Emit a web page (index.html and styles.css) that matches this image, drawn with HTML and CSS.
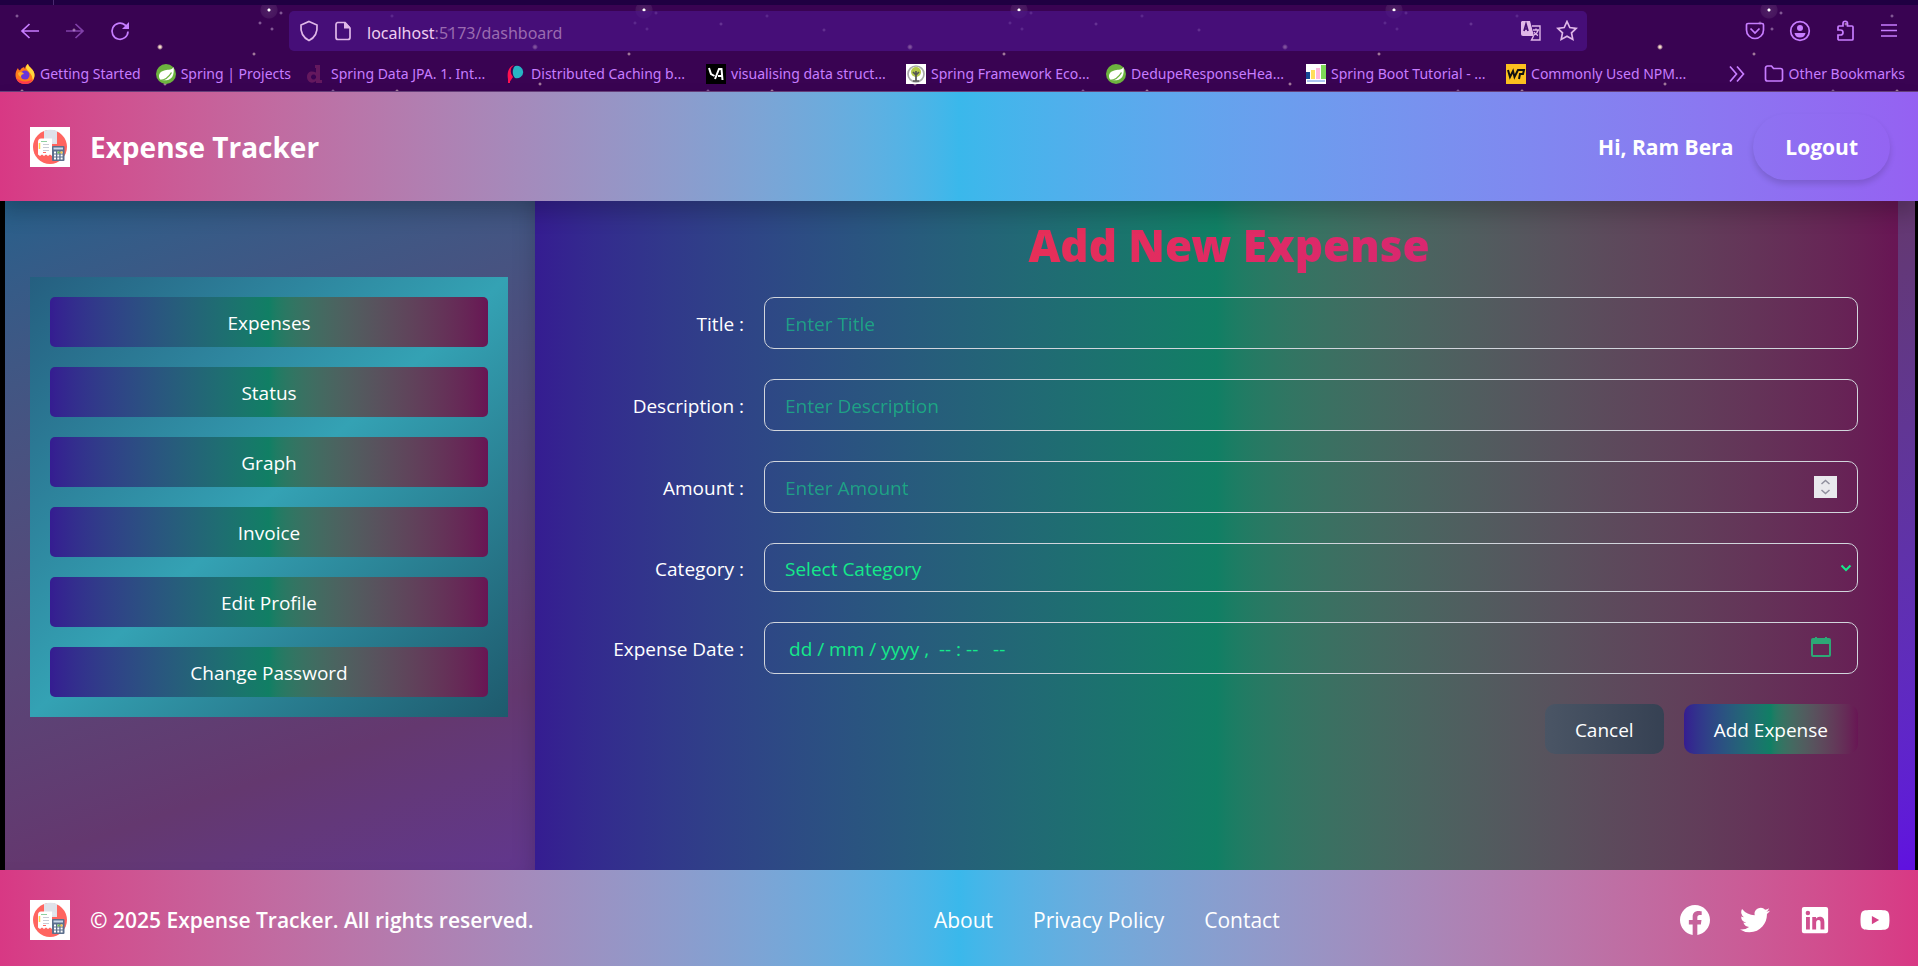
FILE: index.html
```html
<!DOCTYPE html>
<html lang="en">
<head>
<meta charset="utf-8">
<title>Expense Tracker</title>
<link rel="stylesheet" href="styles.css">
</head>
<body>
<svg class="defs" aria-hidden="true">
  <symbol id="logo" viewBox="0 0 40 40">
    <rect width="40" height="40" fill="#fff"/>
    <circle cx="20" cy="20" r="17" fill="#ff6560"/>
    <path d="M14 4.100a17 17 0 0 1 13 0V17H14z" fill="#dfe2ea"/>
    <path d="M11 11.500h11V29l-2-1.500-2 1.500-2-1.500-2 1.500-2-1.500-2 1.500-2-1.500V15c0-2 1-3.500 3-3.500z" fill="#fff"/>
    <path d="M22 11.500c3 0 4 1.500 4 3.500h-4z" fill="#e3e6ee"/>
    <path d="M11 14.500h6" stroke="#8fd0a0" stroke-width="1"/>
    <path d="M13 17.500h6M13 20.500h6M13 23.500h6" stroke="#c9ccd6" stroke-width="1"/>
    <path d="M9.500 16v6" stroke="#ffd54a" stroke-width="1.500"/>
    <path d="M13 25.500h3" stroke="#ff6b66" stroke-width="1"/>
    <rect x="22" y="19" width="12.500" height="15" rx="1" fill="#5b6f8c"/>
    <rect x="23.500" y="20.500" width="9.500" height="2" fill="#c9d8ea"/>
    <path d="M24 25.500h9M24 28.500h9M24 31.500h9" stroke="#fff" stroke-width="2" stroke-dasharray="2 1.300"/>
    <path d="M27.500 24.500h2v2h-2z" fill="#6fc24a"/><path d="M30.500 24.500h2v2h-2z" fill="#ffc93d"/>
  </symbol>
  <symbol id="leaf" viewBox="0 0 20 20">
    <circle cx="10" cy="10" r="10" fill="#6db33f"/>
    <path d="M17.500 3C16 6 13 5.500 9 6.200 5 7 2.800 9.500 3 12.500c.1 1.500.8 2.800 1.600 3.500 4 .6 9 .8 11.600-3C18 10 18 6 17.500 3z" fill="#fff"/>
    <path d="M4 16.500C9 16 13 13 15.500 8.500" fill="none" stroke="#6db33f" stroke-width="1.300"/>
  </symbol>
</svg>

<div class="browser">
  <div class="tabstrip"></div>
  <div class="toolbar">
    <div class="nav">
      <button class="tool" aria-label="Back"><svg width="20" height="20" viewBox="0 0 20 20"><path d="M19 10H2M9.500 3 2 10l7.500 7"/></svg></button>
      <button class="tool dim" aria-label="Forward"><svg width="20" height="20" viewBox="0 0 20 20"><path d="M1 10h17M10.500 3 18 10l-7.500 7"/></svg></button>
      <button class="tool" aria-label="Reload"><svg width="20" height="20" viewBox="0 0 20 20"><path d="M18 10.500A8 8 0 1 1 15 4l1.500 1.500"/><path d="M19 1v7h-7z" fill="currentColor" stroke="none"/></svg></button>
    </div>
    <div class="urlbar">
      <svg width="20" height="22" viewBox="0 0 20 22"><path d="M10 1.500 18 5c.7 7-2 12.500-8 15.500C4 17.500 1.300 12 2 5z"/></svg>
      <svg width="20" height="20" viewBox="0 0 20 20"><path d="M4.500 1.500H12L17 7v9.500a2 2 0 0 1-2 2H5a2 2 0 0 1-2-2V3.500a2 2 0 0 1 1.500-2z"/><path d="M11 1.500h1.500L17 6v1.500h-6z" fill="currentColor" stroke="none"/></svg>
      <span class="url"><b>localhost</b>:5173/dashboard</span>
      <svg class="translate" width="22" height="22" viewBox="0 0 22 22"><path d="M2 1h8l4 15H3a2 2 0 0 1-2-2V2z" fill="currentColor" stroke="none"/><path d="m4 11 2-7 2 7M4.700 9h2.600" stroke="#440e71"/><path d="M12 6h8v14h-8.500l2-4M13 10h6M16 8.500V10m2 0c-.5 3-2 4-4 5m0-3c1 2 3 3 4 3.500" stroke-width="1.400"/></svg>
      <svg width="22" height="22" viewBox="0 0 22 22"><path d="m11 1.500 2.800 6 6.500.8-4.800 4.500 1.300 6.600L11 16.200l-5.800 3.200 1.300-6.600L1.700 8.300l6.500-.8z"/></svg>
    </div>
    <div class="tools">
      <button class="tool" aria-label="Pocket"><svg width="20" height="20" viewBox="0 0 20 20"><path d="M3 2.500h14a1.500 1.500 0 0 1 1.500 1.500v5a8.500 8.500 0 0 1-17 0V4A1.500 1.500 0 0 1 3 2.500zM5.500 7.500 10 12l4.500-4.500"/></svg></button>
      <button class="tool" aria-label="Account"><svg width="22" height="22" viewBox="0 0 22 22"><circle cx="11" cy="11" r="9.300"/><circle cx="11" cy="8" r="3" fill="currentColor" stroke="none"/><path d="M5.500 13h11a5.600 5.600 0 0 1-11 0z" fill="currentColor" stroke="none"/></svg></button>
      <button class="tool" aria-label="Extensions"><svg width="20" height="22" viewBox="0 0 20 22"><path d="M2 10V7a1 1 0 0 1 1-1h4V3.500a2 2 0 0 1 4.500 0V6H16a1 1 0 0 1 1 1v12a1 1 0 0 1-1 1H3a1 1 0 0 1-1-1v-4h2.500a2.500 2.500 0 0 0 0-5H2z"/></svg></button>
      <button class="tool" aria-label="Menu"><svg width="18" height="20" viewBox="0 0 18 20"><path d="M1 4h16M1 9.500h16M1 15h16"/></svg></button>
    </div>
  </div>
  <nav class="bookmarks">
    <a href="#"><svg width="20" height="20" viewBox="0 0 20 20"><path d="M10 20C4 20 .5 16 .5 11c0-3 1-5 2.500-7 .3 1.500 1 2 2 2.500C6 4 8 3.500 9 3l1 2c0-2 1-4 3-5 .5 3 6.500 5 6.500 11S16 20 10 20z" fill="#ff7a1a"/><path d="M13 0c0 3 6.500 5 6.500 11 0 2-.7 4-2 5.500C18 10 13 8 11 4c0-2 1-3.500 2-4z" fill="#ffd83d"/><path d="M1 13c3 5 12 6 17 2-1.500 3-4.500 5-8 5-4.500 0-8-2.500-9-7z" fill="#ff3a4d"/><circle cx="10" cy="11" r="4.500" fill="#6a35d9"/><path d="M3 9c2-2 5-1 6 1-2 0-3 1-3 3-2-1-3-2-3-4z" fill="#ffb02e"/></svg><span>Getting Started</span></a>
    <a href="#"><svg width="20" height="20"><use href="#leaf"/></svg><span>Spring | Projects</span></a>
    <a class="long" href="#"><svg width="20" height="20" viewBox="0 0 20 20"><path d="M9 1h5v15h2v3h-6v-2c-4 3.500-9 1-9-4s4-7 9-4.500V4H9zM7.500 10.500a2.500 2.500 0 1 0 .1 0z" fill="#64185e" fill-rule="evenodd"/></svg><span>Spring Data JPA. 1. Int...</span></a>
    <a class="long" href="#"><svg width="20" height="20" viewBox="0 0 20 20"><path d="M8 1a8 8 0 0 0-1 12L3 19C0 10 2 3 8 1z" fill="#ff1150"/><path d="M4 12v7H2v-8z" fill="#ff1150"/><path d="M9 2a6.300 6.300 0 1 1 0 12c-3-3-3-9 0-12z" fill="#27b4c4"/></svg><span>Distributed Caching b...</span></a>
    <a class="long" href="#"><svg width="20" height="20" viewBox="0 0 20 20"><path d="M0 0h20v20H0z" fill="#000"/><path d="m3 4 2 6 3.500 2M9 15l4-10h2.500l1 11M12 12h4" fill="none" stroke="#fff" stroke-width="2"/></svg><span>visualising data struct...</span></a>
    <a class="long" href="#"><svg width="20" height="20" viewBox="0 0 20 20"><path d="M0 0h20v20H0z" fill="#fff"/><circle cx="10" cy="10" r="8" fill="none" stroke="#aaa"/><circle cx="10" cy="8" r="5" fill="#b5c94a"/><path d="M10 7v10M7 17h6M10 11l-3-3M10 11l3-3" stroke="#555" fill="none"/></svg><span>Spring Framework Eco...</span></a>
    <a class="long" href="#"><svg width="20" height="20"><use href="#leaf"/></svg><span>DedupeResponseHea...</span></a>
    <a class="long" href="#"><svg width="20" height="20" viewBox="0 0 20 20"><path d="M0 0h20v20H0z" fill="#fff"/><path d="M0 8h4v7H0z" fill="#164a94"/><path d="M5 6h4v9H5z" fill="#ffdf5a"/><path d="M10 4h4v11h-4z" fill="#ffb8dd"/><path d="M15 1h5v14h-5z" fill="#7ed957"/><path d="M1 17h18" stroke="#9dbcf0"/></svg><span>Spring Boot Tutorial - ...</span></a>
    <a class="long" href="#"><svg width="20" height="20" viewBox="0 0 20 20"><path d="M0 0h20v20H0z" fill="#fcc01f"/><path d="m2 6 2 7 3-6 1.500 6L12 6h6l-1 4h-3l-1 5" fill="none" stroke="#111" stroke-width="2"/></svg><span>Commonly Used NPM...</span></a>
    <button class="tool more" aria-label="More bookmarks"><svg width="18" height="18" viewBox="0 0 18 18"><path d="m2 1.500 6.500 7.500L2 16.500M9 1.500 15.500 9 9 16.500"/></svg></button>
    <a class="other" href="#"><svg width="20" height="20" viewBox="0 0 20 20"><path d="M1.500 4a2 2 0 0 1 2-2h4l2 2.500h7a2 2 0 0 1 2 2V15a2 2 0 0 1-2 2h-13a2 2 0 0 1-2-2z"/></svg><span>Other Bookmarks</span></a>
  </nav>
</div>

<header class="site-header">
  <svg width="40" height="40"><use href="#logo"/></svg>
  <h1>Expense Tracker</h1>
  <span class="greeting">Hi, Ram Bera</span>
  <button class="logout">Logout</button>
</header>

<main class="page">
  <aside class="sidebar">
    <div class="menu">
      <button>Expenses</button>
      <button>Status</button>
      <button>Graph</button>
      <button>Invoice</button>
      <button>Edit Profile</button>
      <button>Change Password</button>
    </div>
  </aside>
  <section class="content">
    <h2>Add New Expense</h2>
    <form>
      <label for="title">Title :</label>
      <div class="field"><input id="title" type="text" placeholder="Enter Title"></div>
      <label for="description">Description :</label>
      <div class="field"><input id="description" type="text" placeholder="Enter Description"></div>
      <label for="amount">Amount :</label>
      <div class="field"><input id="amount" type="number" placeholder="Enter Amount">
        <svg class="spin" width="23" height="22" viewBox="0 0 23 22"><path d="M0 0h23v22H0z" fill="#e9e9ed"/><path d="m7.500 8 4-3.500 4 3.500M7.500 14l4 3.500 4-3.500" fill="none" stroke="#8f8f9d" stroke-width="1.500"/></svg></div>
      <label for="category">Category :</label>
      <div class="field"><select id="category"><option>Select Category</option></select>
        <svg class="chevron" width="12" height="8" viewBox="0 0 12 8"><path d="m1.500 1.500 4.500 4.500 4.500-4.500" fill="none" stroke="#15e98a" stroke-width="2"/></svg></div>
      <label for="date">Expense Date :</label>
      <div class="field"><input id="date" class="date" type="text" placeholder="dd / mm / yyyy ,  -- : --   --">
        <svg class="calendar" width="20" height="20" viewBox="0 0 20 20"><path d="M2 1h2V0h2v1h8V0h2v1h2a2 2 0 0 1 2 2v15a2 2 0 0 1-2 2H2a2 2 0 0 1-2-2V3a2 2 0 0 1 2-2zm0 6v11h16V7z" fill="#2da876" fill-rule="evenodd"/></svg></div>
      <div class="actions">
        <button class="cancel" type="button">Cancel</button>
        <button class="add" type="submit">Add Expense</button>
      </div>
    </form>
  </section>
</main>

<footer class="site-footer">
  <div class="copy"><svg width="40" height="40"><use href="#logo"/></svg><span>© 2025 Expense Tracker. All rights reserved.</span></div>
  <nav class="links"><a href="#">About</a><a href="#">Privacy Policy</a><a href="#">Contact</a></nav>
  <div class="social">
    <a href="#" aria-label="Facebook"><svg width="30" height="30" viewBox="0 0 24 24"><path d="M24 12.070C24 5.400 18.630 0 12 0S0 5.400 0 12.070C0 18.100 4.390 23.090 10.130 24v-8.440H7.080v-3.490h3.050V9.410c0-3.020 1.790-4.700 4.530-4.700 1.310 0 2.680.24 2.680.24v2.970h-1.510c-1.490 0-1.960.93-1.960 1.890v2.260h3.330l-.53 3.490h-2.800V24C19.610 23.090 24 18.100 24 12.070z"/></svg></a>
    <a href="#" aria-label="Twitter"><svg width="30" height="30" viewBox="0 0 24 24"><path d="M23.950 4.570a10 10 0 0 1-2.820.77 4.960 4.960 0 0 0 2.160-2.720c-.95.550-2 .950-3.130 1.180a4.920 4.920 0 0 0-8.380 4.480A13.930 13.930 0 0 1 1.640 3.160a4.920 4.920 0 0 0 1.520 6.570 4.900 4.900 0 0 1-2.230-.61v.06a4.920 4.920 0 0 0 3.950 4.830 5 5 0 0 1-2.210.08 4.940 4.940 0 0 0 4.600 3.420A9.870 9.870 0 0 1 0 19.540a13.990 13.990 0 0 0 7.550 2.210c9.050 0 14-7.500 14-13.980 0-.21 0-.42-.02-.63a9.940 9.940 0 0 0 2.460-2.550z"/></svg></a>
    <a href="#" aria-label="LinkedIn"><svg width="30" height="30" viewBox="0 0 24 24"><path d="M20.800 1.500H3.100A1.600 1.600 0 0 0 1.500 3.100v17.800a1.600 1.600 0 0 0 1.600 1.600h17.700a1.700 1.700 0 0 0 1.700-1.600V3.100a1.700 1.700 0 0 0-1.700-1.600zM7.900 19.500H4.800v-10h3.100zM6.300 8.100a1.800 1.800 0 1 1 0-3.600 1.800 1.800 0 0 1 0 3.600zm13.200 11.400h-3.100v-4.900c0-1.200 0-2.600-1.600-2.600s-1.900 1.200-1.900 2.500v5H9.800v-10h3v1.400c.4-.8 1.400-1.600 2.900-1.600 3.200 0 3.800 2.100 3.800 4.800z"/></svg></a>
    <a href="#" aria-label="YouTube"><svg width="30" height="30" viewBox="0 0 24 24"><path d="M23.200 7.200a3.200 3.200 0 0 0-2.500-2.800C18.500 4 12 4 12 4s-6.500 0-8.700.4A3.200 3.200 0 0 0 .8 7.200C.4 9 .4 12 .4 12s0 3 .4 4.800a3.200 3.200 0 0 0 2.500 2.800C5.500 20 12 20 12 20s6.500 0 8.700-.4a3.200 3.200 0 0 0 2.500-2.800c.4-1.800.4-4.800.4-4.800s0-3-.4-4.800zM9.500 15.300V8.700l5.800 3.300z"/></svg></a>
  </div>
</footer>
</body>
</html>
```

FILE: styles.css
```css
* { box-sizing: border-box; }
:root { --jewel: linear-gradient(to right in oklab, #351c91, #107f64, #681554); }
body {
  margin: 0;
  min-height: 100vh;
  display: flex;
  flex-direction: column;
  background: #000;
  color: #fff;
  font-family: "Open Sans", "Noto Sans", sans-serif;
  font-size: 19px;
}
button, input, select { font: inherit; color: inherit; }
button { border: 0; background: none; cursor: pointer; }
a { color: inherit; text-decoration: none; }
svg { display: block; flex: none; }
.defs { display: none; }

/* Browser window */
.browser {
  height: 92px;
  border-bottom: 1px solid #68417c;
  color: #c77dff;
  background-color: #390352;
  background-image:
    radial-gradient(circle at 269px 10px, #fff 1px, #ffffff1a 2px, #ffffff12 8px, transparent 9px),
    radial-gradient(circle at 160px 47px, #f5dcc8 1px, transparent 3px),
    radial-gradient(circle at 254px 54px, #d9b8c0, transparent 2px),
    radial-gradient(circle at 281px 13px, #a985b8, transparent 2px),
    radial-gradient(circle at 260px 23px, #a985b8, transparent 2px),
    radial-gradient(circle at 272px 29px, #a985b8, transparent 2px),
    radial-gradient(circle at 17px 16px, #a985b8, transparent 2px),
    radial-gradient(circle at 346px 24px, #d9b8d8, transparent 2px),
    radial-gradient(circle at 74px 30px, #c9a8c8, transparent 2px),
    radial-gradient(circle at 165px 84px, #d9b8c0, transparent 2px),
    radial-gradient(circle at 22px 91px, #d9b8c0, transparent 2px),
    radial-gradient(circle at 333px 91px, #a985b8, transparent 2px);
  background-size: 375px 92px;
  font-family: "Noto Sans", sans-serif;
}
.browser svg { fill: none; stroke: currentColor; stroke-width: 1.700; }
.bookmarks a:not(.other) svg { stroke: none; }
.tabstrip { height: 5px; background: linear-gradient(to right, #1f0042 53px, #4a2a70 53px 54px, #1f0042 54px); }
.toolbar { display: flex; align-items: center; height: 52px; padding: 0 20px 0 20px; }
.tool { display: grid; place-items: center; padding: 0; color: inherit; }
.nav { display: flex; gap: 25px; width: 269px; }
.dim { opacity: .5; }
.urlbar {
  flex: 1;
  display: flex;
  align-items: center;
  gap: 14px;
  height: 40px;
  padding: 0 9px 0 10px;
  border-radius: 5px;
  background: #4b1489b3;
  color: #e0b8e8;
}
.url { flex: 1; padding-top: 3px; font-size: 16px; color: #9a6bb0; }
.url b { font-weight: 400; color: #f0cdf0; }
.tools { display: flex; align-items: center; justify-content: space-between; width: 311px; padding-left: 158px; }
.bookmarks { display: flex; align-items: center; height: 34px; padding: 0 13px 0 15px; font-size: 14px; line-height: 20px; white-space: nowrap; }
.bookmarks a { display: flex; align-items: center; gap: 5px; margin-right: 15px; }
.bookmarks .long { width: 185px; }
.bookmarks .more { margin-left: auto; margin-right: 18px; }
.bookmarks .other { margin-right: 0; }

/* Header */
.site-header {
  position: relative;
  display: flex;
  align-items: center;
  gap: 20px;
  padding: 22px 28px 21px 30px;
  background: linear-gradient(to right in oklab, #d83884, #3ab8eb, #9561f2);
  box-shadow: 0 12px 20px #0003;
}
.site-header h1 { flex: 1; margin: 0; font-size: 28px; line-height: 40px; }
.greeting { font-weight: 700; font-size: 21px; }
.logout { padding: 17px 32px 16px; border-radius: 50px; font-size: 21px; line-height: 33px; font-weight: 700; box-shadow: 0 4px 6px #00000024; }

/* Dashboard */
.page {
  flex: 1;
  display: flex;
  margin: 0 3px 0 5px;
  padding-right: 17px;
  background: linear-gradient(to bottom right in oklab, #27608b, #64386f, #6010e0);
}
.sidebar { width: 28%; display: flex; flex-direction: column; justify-content: center; padding: 0 27px 77px 25px; box-shadow: inset -15px 0 25px -16px #0003; }
.menu { display: flex; flex-direction: column; gap: 20px; padding: 20px; background: linear-gradient(to bottom right in oklab, #255f80, #34a2b4, #1e5a6d); }
.menu button { height: 50px; padding: 2px 0 0; border-radius: 5px; background: var(--jewel); }
.content { flex: 1; padding: 14px 40px 40px 65px; background: var(--jewel); }
.content h2 {
  width: max-content;
  margin: 0 auto 22px;
  font-family: "Noto Sans", sans-serif;
  font-size: 44px;
  line-height: 60px;
  font-weight: 900;
  color: transparent;
  background: linear-gradient(to right, #e62f58, #d92770);
  background-clip: text;
}
form { display: grid; grid-template-columns: 144px 1fr; gap: 30px 20px; align-items: center; }
label { padding-top: 2px; text-align: right; }
.field { position: relative; display: grid; }
.field input, .field select {
  width: 100%;
  height: 52px;
  padding: 2px 20px 0;
  border: 1px solid #d1d5dc;
  border-radius: 10px;
  background: transparent;
  color: #15e98a;
  appearance: none;
}
.field select { height: 49px; }
.field input[type="number"] { appearance: textfield; }
.field input::placeholder { color: #15e98a; opacity: .52; }
.field .date { padding-left: 24px; }
.field .date::placeholder { opacity: 1; }
.spin, .chevron, .calendar { position: absolute; pointer-events: none; }
.spin { right: 21px; top: 15px; }
.chevron { right: 6px; top: 21px; }
.calendar { right: 27px; top: 15px; }
.actions { grid-column: 1 / -1; display: flex; justify-content: flex-end; gap: 20px; }
.actions button { height: 50px; padding: 2px 30px 0; border-radius: 10px; }
.cancel { background: linear-gradient(to right, #4a5565, #364153); }
.add { background: var(--jewel); }

/* Footer */
.site-footer {
  display: flex;
  align-items: center;
  justify-content: space-between;
  height: 96px;
  padding: 4px 28px 0 30px;
  background: linear-gradient(to right in oklab, #d83884, #3ab8eb, #d83884);
  font-size: 21px;
}
.copy { display: flex; align-items: center; gap: 20px; font-weight: 600; }
.links { display: flex; gap: 40px; }
.social { display: flex; justify-content: flex-end; gap: 30px; }
.social svg { fill: #fff; }
```
